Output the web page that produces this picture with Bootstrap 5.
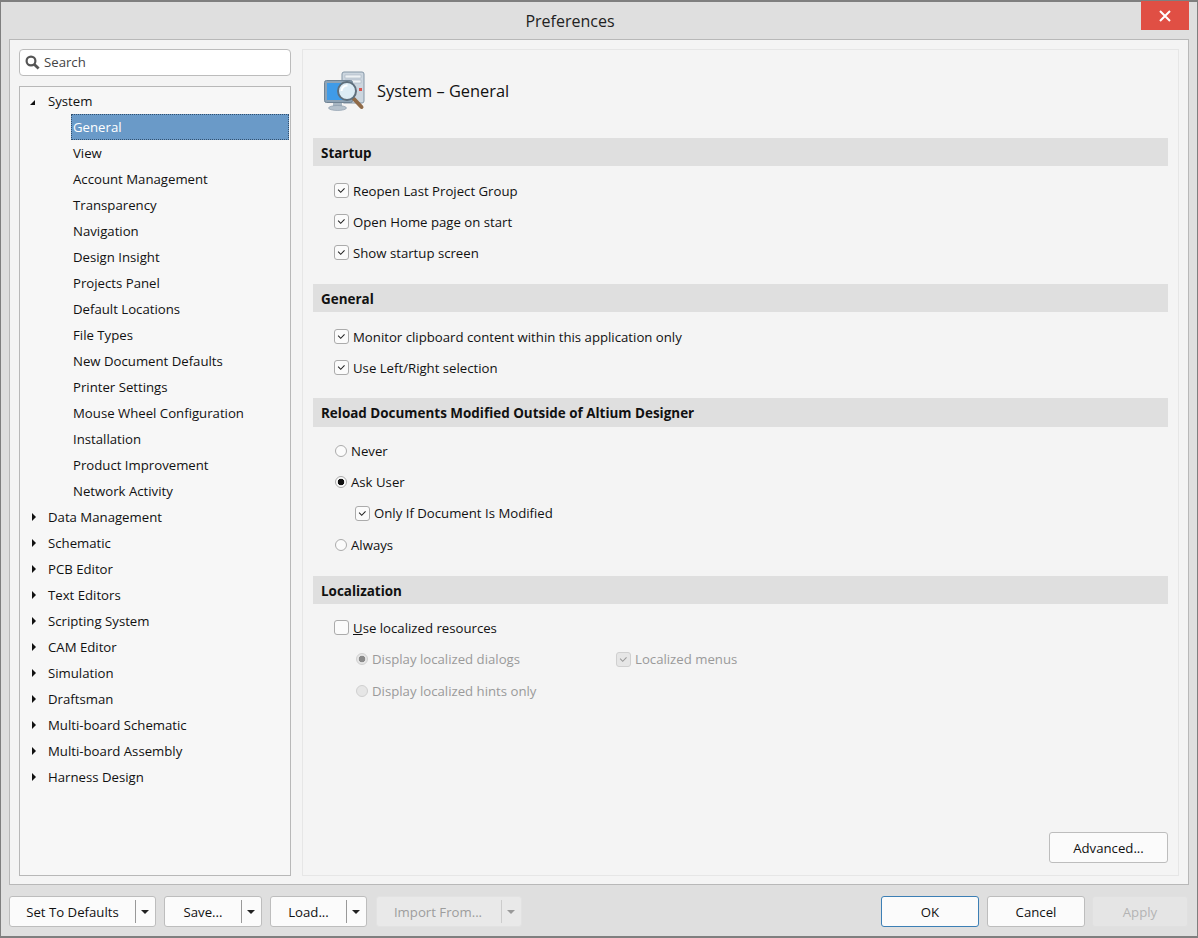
<!DOCTYPE html>
<html lang="en">
<head>
<meta charset="utf-8">
<title>Preferences</title>
<link href="https://cdn.jsdelivr.net/npm/bootstrap@5.3.3/dist/css/bootstrap.min.css" rel="stylesheet">
<style>
    html, body { height: 938px; overflow: hidden; }
    body { background: #dfdfdf; font-family: "Open Sans", "Noto Sans", sans-serif; font-size: 13.2px; color: #111; }

    .win { width: 1198px; height: 938px; border: 1px solid #7f7f7f; border-top-width: 2px; border-bottom-width: 2px; position: relative; }
    .win-title { height: 37px; font-size: 16px; line-height: 38px; text-align: center; padding-right: 58px; color: #222; }
    .win-close { position: absolute; top: -1px; right: 8px; width: 48px; height: 29px; background: #e04f44; }

    .body-panel { margin: 0 8px; height: 846px; background: #f4f4f4; border: 1px solid #b8b8b8; padding: 9px; gap: 11px; }
    .left-col { width: 272px; flex: none; }

    .search-box { height: 27px; background: #fff; border: 1px solid #bcbcbc; border-radius: 4px; padding-left: 5px; gap: 4px; margin-bottom: 10px; color: #444; }
    .tree { height: 790px; border: 1px solid #b8b8b8; background: #f7f7f7; padding-top: 1px; }
    .tree-row { height: 26px; line-height: 26px; padding-left: 28px; position: relative; }
    .tree-sub { margin-left: 51px; margin-right: 1px; padding-left: 2px; }
    .tree-sel { background: #6a9ac8; color: #fff; outline: 1px dotted #33506e; outline-offset: -1px; }
    .tw-open, .tw-shut { position: absolute; width: 0; height: 0; }
    .tw-open { left: 10px; top: 12px; border-left: 5px solid transparent; border-bottom: 5px solid #111; }
    .tw-shut { left: 12px; top: 9px; border-top: 4px solid transparent; border-bottom: 4px solid transparent; border-left: 4px solid #111; }

    .right-pane { width: 877px; height: 827px; border: 1px solid #e6e6e6; padding: 0 10px; position: relative; }
    .pane-head { height: 88px; gap: 12px; padding: 0 0 6px 10px; font-size: 16.4px; }
    .sect-bar { height: 28px; line-height: 30px; background: #dfdfdf; font-weight: 700; font-size: 13.45px; padding-left: 8px; }
    .sect-gap { margin-top: 15px; }
    .sect-tall { height: 29px; margin-top: 14px; line-height: 30px; }
    .opts { padding: 10px 0 0 21px; }
    .opts.tight { padding-top: 9px; }
    .opt-row { height: 31px; gap: 4px; }
    .opt-row.ind { margin-left: 21px; }
    .opt-row.off { color: #9a9a9a; }
    .opt-row.tall { height: 32px; }

    .box-check, .box-radio { appearance: none; flex: none; margin: -2px 0 0; background: #fbfbfb; border: 1px solid #ababab; }
    .box-check { width: 15px; height: 15px; border-radius: 3px; }
    .box-check:checked { background-image: url("data:image/svg+xml,%3Csvg xmlns='http://www.w3.org/2000/svg' viewBox='0 0 15 15'%3E%3Cpath d='M3.6 6.6l3 3L11 5' fill='none' stroke='%23222' stroke-width='1.2'/%3E%3C/svg%3E"); }
    .box-radio { width: 12px; height: 12px; border-radius: 50%; margin-left: 1px; }
    .box-radio:checked { background: radial-gradient(circle, #111 0 3px, #fbfbfb 3.6px); }
    .off .box-check, .off .box-radio { background-color: #e6e6e6; border-color: #d0d0d0; }
    .off .box-check:checked { background-image: url("data:image/svg+xml,%3Csvg xmlns='http://www.w3.org/2000/svg' viewBox='0 0 15 15'%3E%3Cpath d='M3.6 6.6l3 3L11 5' fill='none' stroke='%23999' stroke-width='1.2'/%3E%3C/svg%3E"); }
    .off .box-radio:checked { background: radial-gradient(circle, #8a8a8a 0 3px, #e6e6e6 3.6px); }
    .localized-col { width: 261px; }

    .dlg-btn { background: #fbfbfb; border: 1px solid #bdbdbd; border-radius: 3px; color: #111; font-size: 13.2px; padding: 2px 0 0; height: 31px; }
    .dlg-btn.is-off { background: #e9e9e9; border-color: #e2e2e2; color: #9d9d9d; }
    .dlg-btn.is-def { border-color: #3c7fb5; }
    .btn-adv { position: absolute; right: 10px; bottom: 12px; width: 119px; }
    .btn-main { width: 98px; }
    .btn-apply { width: 96px; margin-left: -1px; }

    .foot { padding: 11px 9px 0 8px; gap: 8px; }
    .split { display: flex; height: 31px; align-items: stretch; padding: 0; }
    .split .s-label { flex: 1; text-align: center; line-height: 31px; }
    .split .s-arrow { width: 20px; flex: none; margin: 3px 0; border-left: 1px solid #999; position: relative; }
    .split .s-arrow::after { content: ""; position: absolute; left: 5px; top: 10px; border-left: 4px solid transparent; border-right: 4px solid transparent; border-top: 4px solid #222; }
    .is-off .s-arrow { border-left-color: #ccc; }
    .is-off .s-arrow::after { border-top-color: #999; }
    .w-defaults { width: 147px; }
    .w-save { width: 98px; }
    .w-load { width: 97px; }
    .w-import { width: 146px; margin-left: 1px; }
    .w-import .s-label { padding-right: 2px; }
</style>
</head>
<body>
<div class="win">
    <div class="win-title">Preferences</div>
    <div class="win-close d-flex align-items-center justify-content-center">
        <svg width="12" height="12" viewBox="0 0 12 12"><path d="M1 1l10 10M11 1L1 11" stroke="#fff" stroke-width="2" fill="none"/></svg>
    </div>

    <div class="body-panel d-flex">
        <div class="left-col">
            <div class="search-box d-flex align-items-center">
                <svg width="15" height="15" viewBox="0 0 15 15"><circle cx="6" cy="6" r="4.4" fill="none" stroke="#555" stroke-width="2.2"/><path d="M9.4 9.4l4.2 4.2" stroke="#555" stroke-width="2.8"/></svg>
                <span>Search</span>
            </div>
            <div class="tree" id="tree"></div>
        </div>

        <div class="right-pane">
            <div class="pane-head d-flex align-items-center">
                <svg width="42" height="42" viewBox="0 0 42 42">
                    <rect x="19" y="2" width="22" height="31" rx="2" fill="#ccd6df" stroke="#8496a6"/>
                    <rect x="22" y="5" width="16" height="3" fill="#eef2f5" stroke="#9aa9b6" stroke-width=".5"/>
                    <rect x="22" y="10" width="16" height="3" fill="#eef2f5" stroke="#9aa9b6" stroke-width=".5"/>
                    <rect x="36" y="18" width="3" height="3" fill="#d9534f"/>
                    <rect x="1.5" y="10.5" width="28" height="22" rx="2" fill="#8ea3b5" stroke="#6f8394"/>
                    <rect x="4" y="13" width="23" height="17" fill="#3f9be8"/>
                    <path d="M10 33h9v4h-9z" fill="#a7b6c2"/>
                    <ellipse cx="14.5" cy="38" rx="9" ry="2.5" fill="#b4c1cc" stroke="#8496a6" stroke-width=".6"/>
                    <path d="M31 29l7.5 8" stroke="#8f6a48" stroke-width="4" stroke-linecap="round"/>
                    <circle cx="24" cy="21" r="9" fill="#dcecf5" stroke="#5f6f7c" stroke-width="2"/>
                    <path d="M18.5 21a5.5 5.5 0 0 1 6-5.5" fill="none" stroke="#fff" stroke-width="2"/>
                </svg>
                <span>System – General</span>
            </div>

            <div class="sect-bar">Startup</div>
            <div class="opts">
                <label class="opt-row d-flex align-items-center"><input class="box-check" type="checkbox" checked>Reopen Last Project Group</label>
                <label class="opt-row d-flex align-items-center"><input class="box-check" type="checkbox" checked>Open Home page on start</label>
                <label class="opt-row d-flex align-items-center"><input class="box-check" type="checkbox" checked>Show startup screen</label>
            </div>

            <div class="sect-bar sect-gap">General</div>
            <div class="opts">
                <label class="opt-row d-flex align-items-center"><input class="box-check" type="checkbox" checked>Monitor clipboard content within this application only</label>
                <label class="opt-row d-flex align-items-center"><input class="box-check" type="checkbox" checked>Use Left/Right selection</label>
            </div>

            <div class="sect-bar sect-tall">Reload Documents Modified Outside of Altium Designer</div>
            <div class="opts tight">
                <label class="opt-row d-flex align-items-center"><input class="box-radio" type="radio" name="reload">Never</label>
                <label class="opt-row d-flex align-items-center"><input class="box-radio" type="radio" name="reload" checked>Ask User</label>
                <label class="opt-row ind tall d-flex align-items-center"><input class="box-check" type="checkbox" checked>Only If Document Is Modified</label>
                <label class="opt-row d-flex align-items-center"><input class="box-radio" type="radio" name="reload">Always</label>
            </div>

            <div class="sect-bar sect-gap">Localization</div>
            <div class="opts tight">
                <label class="opt-row d-flex align-items-center"><input class="box-check" type="checkbox"><span><u>U</u>se localized resources</span></label>
                <div class="d-flex">
                    <label class="opt-row ind tall off d-flex align-items-center localized-col"><input class="box-radio" type="radio" name="loc" disabled checked>Display localized dialogs</label>
                    <label class="opt-row tall off d-flex align-items-center"><input class="box-check" type="checkbox" disabled checked>Localized menus</label>
                </div>
                <label class="opt-row ind off d-flex align-items-center"><input class="box-radio" type="radio" name="loc" disabled>Display localized hints only</label>
            </div>

            <button type="button" class="btn dlg-btn btn-adv">Advanced...</button>
        </div>
    </div>

    <div class="foot d-flex">
        <div class="dlg-btn split w-defaults"><span class="s-label">Set To Defaults</span><span class="s-arrow"></span></div>
        <div class="dlg-btn split w-save"><span class="s-label">Save...</span><span class="s-arrow"></span></div>
        <div class="dlg-btn split w-load"><span class="s-label">Load...</span><span class="s-arrow"></span></div>
        <div class="dlg-btn split is-off w-import"><span class="s-label">Import From...</span><span class="s-arrow"></span></div>
        <div class="ms-auto d-flex gap-2">
            <button type="button" class="btn dlg-btn btn-main is-def">OK</button>
            <button type="button" class="btn dlg-btn btn-main">Cancel</button>
            <button type="button" class="btn dlg-btn btn-apply is-off" disabled>Apply</button>
        </div>
    </div>
</div>

<script>
    // Tree rows are plain data; first group is expanded
    const subItems = ['General', 'View', 'Account Management', 'Transparency', 'Navigation', 'Design Insight',
        'Projects Panel', 'Default Locations', 'File Types', 'New Document Defaults', 'Printer Settings',
        'Mouse Wheel Configuration', 'Installation', 'Product Improvement', 'Network Activity'];
    const topItems = ['Data Management', 'Schematic', 'PCB Editor', 'Text Editors', 'Scripting System', 'CAM Editor',
        'Simulation', 'Draftsman', 'Multi-board Schematic', 'Multi-board Assembly', 'Harness Design'];

    const tree = document.getElementById('tree');
    let html = '<div class="tree-row"><span class="tw-open"></span>System</div>';
    subItems.forEach(function (name, i) {
        html += '<div class="tree-row tree-sub' + (i === 0 ? ' tree-sel' : '') + '">' + name + '</div>';
    });
    topItems.forEach(function (name) {
        html += '<div class="tree-row"><span class="tw-shut"></span>' + name + '</div>';
    });
    tree.innerHTML = html;
</script>
<script src="https://cdn.jsdelivr.net/npm/bootstrap@5.3.3/dist/js/bootstrap.bundle.min.js"></script>
</body>
</html>
